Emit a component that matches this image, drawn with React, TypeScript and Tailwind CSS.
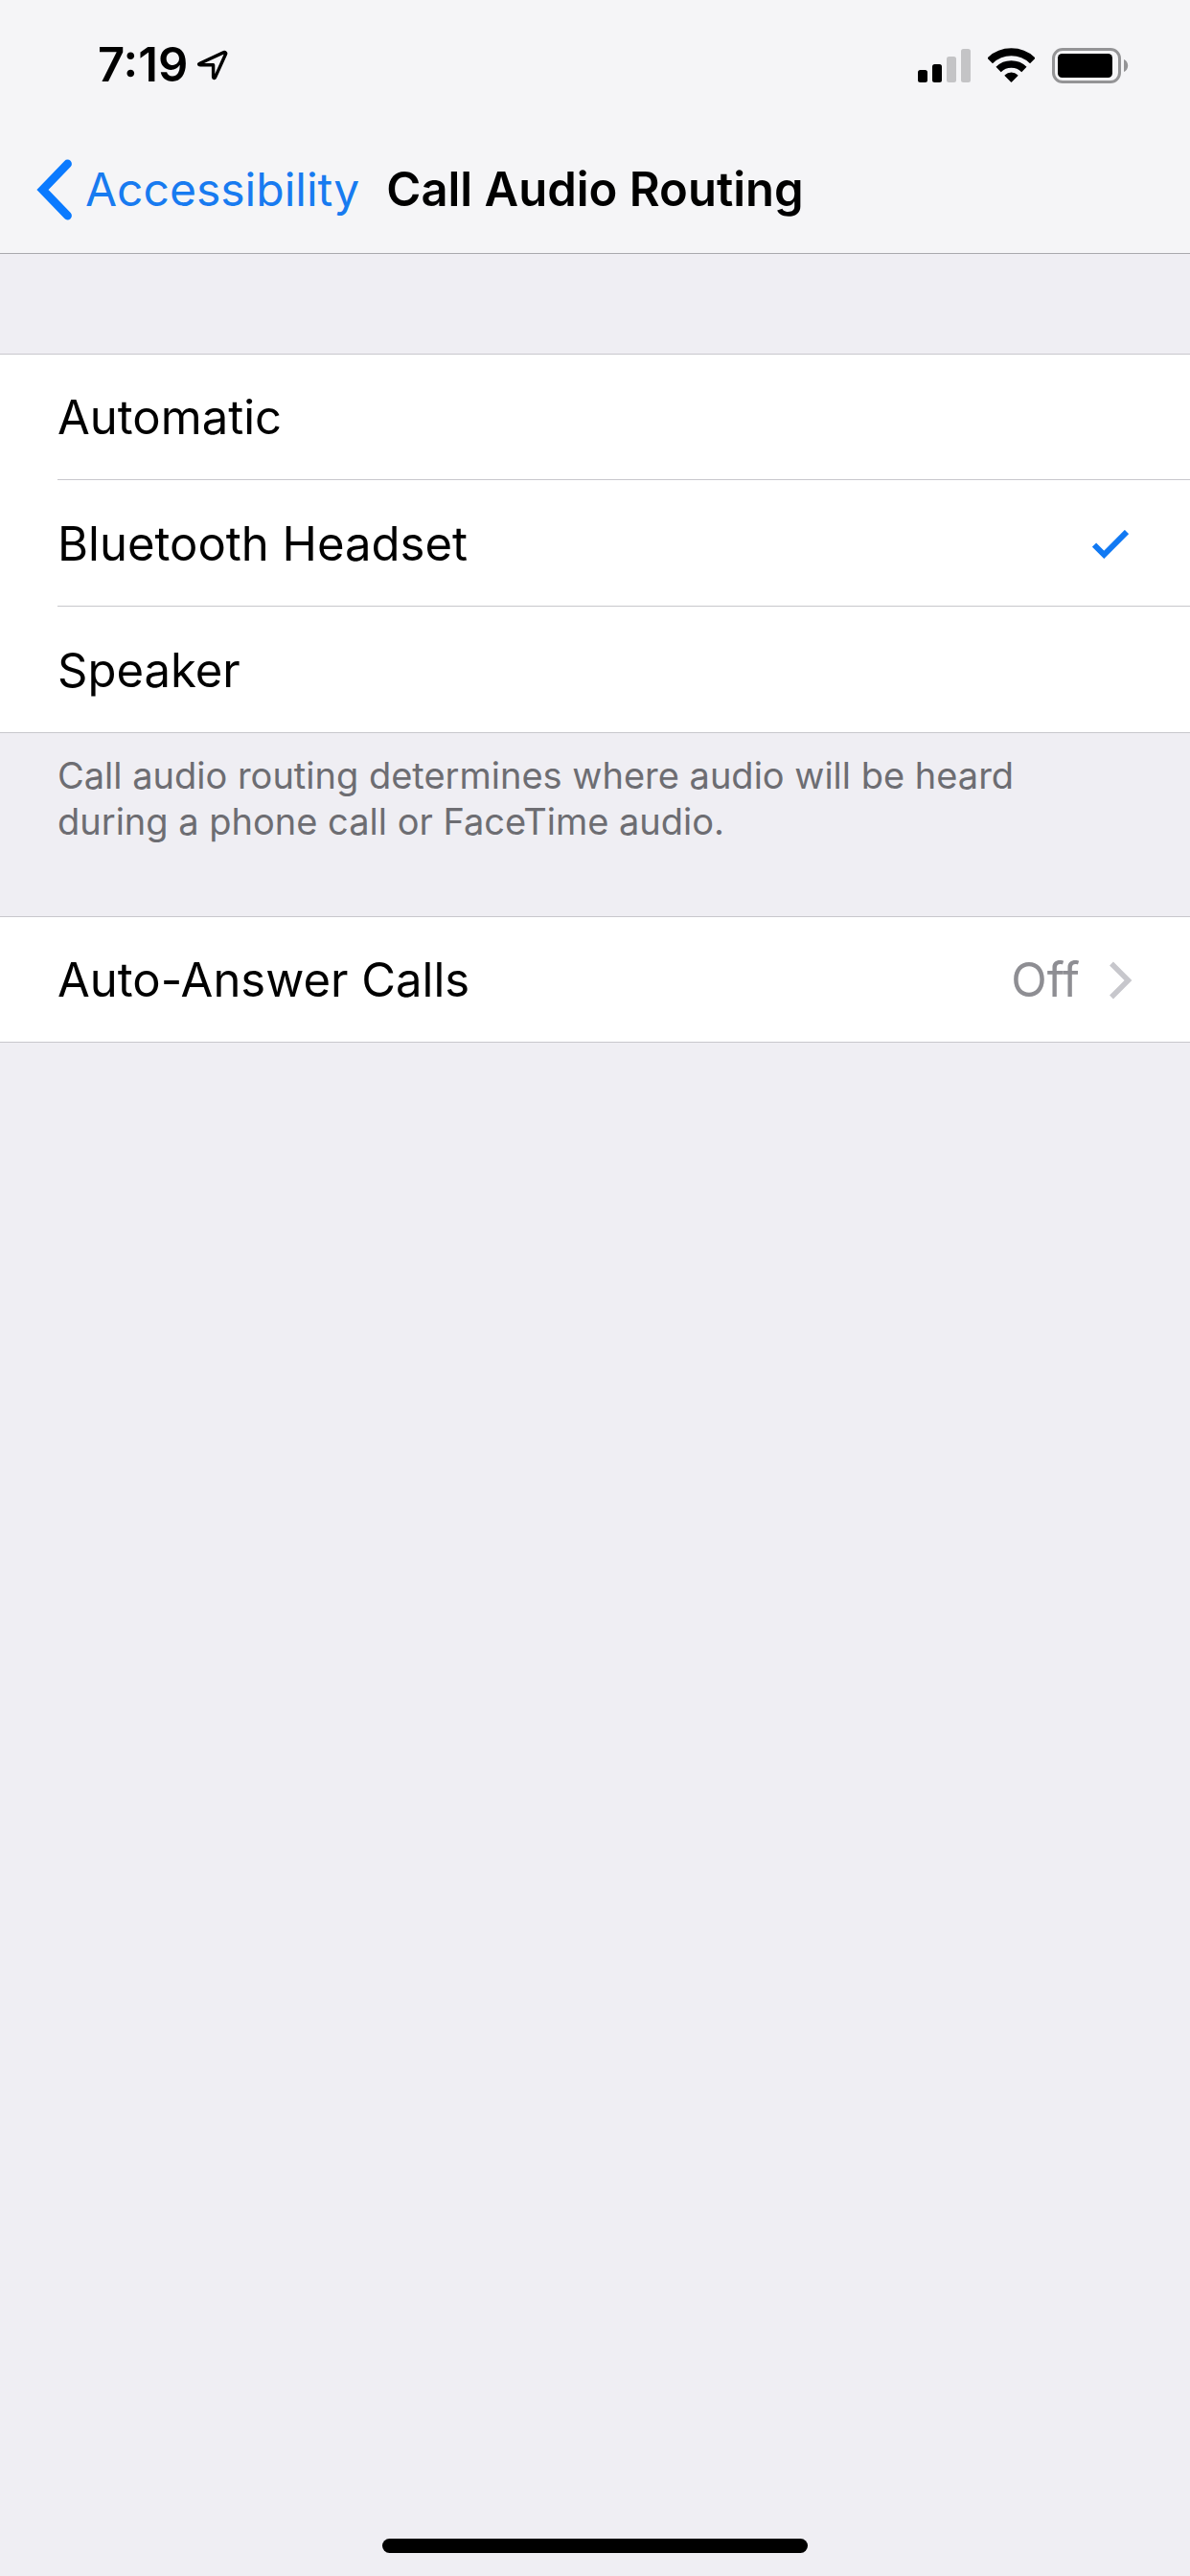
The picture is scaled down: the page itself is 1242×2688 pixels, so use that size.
import { useState } from "react";
import type { ReactNode } from "react";

const ROUTES = ["Automatic", "Bluetooth Headset", "Speaker"];

export default function App() {
  const [route, setRoute] = useState("Bluetooth Headset");

  return (
    <div className="flex min-h-screen flex-col bg-[#efeef3] font-[Inter,sans-serif] text-[49px] leading-[60px] text-black">
      <header className="border-b border-[#a9a9ad] bg-[#f5f5f7]">
        <StatusBar />
        <NavBar />
      </header>

      <main className="pt-[104px]">
        <Group>
          <div role="radiogroup" aria-labelledby="page-title">
            {ROUTES.map((name, i) => (
              <label key={name} className="relative flex cursor-pointer pl-[60px]">
                <input
                  type="radio"
                  name="route"
                  value={name}
                  checked={route === name}
                  onChange={() => setRoute(name)}
                  className="sr-only"
                />
                <span
                  className={
                    i > 0
                      ? "flex h-[132px] flex-1 items-center justify-between border-t border-[#c8c7cc] pt-0.5 pr-16"
                      : "flex h-[130px] flex-1 items-center justify-between pt-0.5 pr-16"
                  }
                >
                  {name}
                  {route === name && <CheckIcon />}
                </span>
              </label>
            ))}
          </div>
        </Group>

        <p className="max-w-[1160px] px-[60px] pt-5 pb-[75px] text-[38px] leading-[48px] text-[#6d6d72]">
          Call audio routing determines where audio will be heard during a phone call or FaceTime
          audio.
        </p>

        <Group>
          <button
            type="button"
            className="flex h-[130px] w-full items-center justify-between px-[60px] pt-0.5 text-left"
          >
            <span>Auto-Answer Calls</span>
            <span className="flex items-center gap-[31px] text-[#8e8e93]">
              Off
              <DisclosureIcon />
            </span>
          </button>
        </Group>
      </main>

      <footer className="mt-auto flex justify-center pb-6">
        <div className="h-[15px] w-[444px] rounded-full bg-black" />
      </footer>
    </div>
  );
}

function Group({ children }: { children: ReactNode }) {
  return <section className="border-y border-[#c8c7cc] bg-white">{children}</section>;
}

function StatusBar() {
  return (
    <div className="flex h-[132px] items-center justify-between pt-1 pr-16 pl-[102px]">
      <div className="flex items-center gap-2.5">
        <time className="font-semibold">7:19</time>
        <LocationIcon />
      </div>
      <div className="flex items-center gap-[18px]">
        <SignalIcon />
        <WifiIcon />
        <BatteryIcon />
      </div>
    </div>
  );
}

function NavBar() {
  return (
    <nav className="grid h-[132px] grid-cols-[1fr_auto_1fr] items-center">
      <a href="#accessibility" className="flex items-center gap-[13px] pl-[38px] text-5xl text-[#187bf0]">
        <BackIcon />
        Accessibility
      </a>
      <h1 id="page-title" className="font-semibold">
        Call Audio Routing
      </h1>
    </nav>
  );
}

function LocationIcon() {
  return (
    <svg width="32" height="32" viewBox="0 0 32 32" fill="none" aria-hidden="true">
      <path
        d="M2.5 14.2 27.6 2.6a1.4 1.4 0 0 1 1.9 1.9L18.6 28.6c-.6 1.4-2 1.1-2-.3V15.8H2.9c-1.5 0-1.8-1-.4-1.6Z"
        stroke="#000"
        strokeWidth="3.4"
        strokeLinejoin="round"
      />
    </svg>
  );
}

function SignalIcon() {
  return (
    <svg width="55" height="36" viewBox="0 0 55 36" aria-hidden="true">
      <rect x="0" y="23" width="10" height="13" rx="2.5" />
      <rect x="15" y="17" width="10" height="19" rx="2.5" />
      <rect x="30" y="9" width="10" height="27" rx="2.5" fill="#c4c4c6" />
      <rect x="45" y="1" width="10" height="35" rx="2.5" fill="#c4c4c6" />
    </svg>
  );
}

function WifiIcon() {
  return (
    <svg width="49" height="36" viewBox="0 0 49 36" fill="none" aria-hidden="true">
      <path d="M2.2 13.4a32 32 0 0 1 44.6 0" stroke="#000" strokeWidth="8" />
      <path d="M11.1 22.4a19.3 19.3 0 0 1 26.8 0" stroke="#000" strokeWidth="7.6" />
      <path
        d="M24.5 35 18.3 28.8a8.8 8.8 0 0 1 12.4 0Z"
        fill="#000"
        stroke="#000"
        strokeWidth="1.5"
        strokeLinejoin="round"
      />
    </svg>
  );
}

function BatteryIcon() {
  return (
    <svg width="80" height="37" viewBox="0 0 80 37" fill="none" aria-hidden="true">
      <rect x="1.5" y="1.5" width="69" height="34" rx="9.5" stroke="#949496" strokeWidth="3" />
      <rect x="6" y="6" width="57" height="25" rx="4.5" fill="#000" />
      <path d="M75 12c2.6 1 4.2 3.6 4.2 6.5s-1.6 5.5-4.2 6.5Z" fill="#949496" />
    </svg>
  );
}

function BackIcon() {
  return (
    <svg width="38" height="64" viewBox="0 0 38 64" fill="none" aria-hidden="true">
      <path d="M32.5 5 6.5 32l26 27" stroke="#0a7aff" strokeWidth="8.8" strokeLinecap="round" />
    </svg>
  );
}

function CheckIcon() {
  return (
    <svg width="38" height="30" viewBox="0 0 38 30" fill="none" aria-hidden="true">
      <path d="M2 15.5 12.3 25.8 36 2" stroke="#1179f3" strokeWidth="6" />
    </svg>
  );
}

function DisclosureIcon() {
  return (
    <svg width="24" height="40" viewBox="0 0 24 40" fill="none" aria-hidden="true">
      <path d="M2 2.5 19.5 20 2 37.5" stroke="#c7c7cc" strokeWidth="5.5" />
    </svg>
  );
}
